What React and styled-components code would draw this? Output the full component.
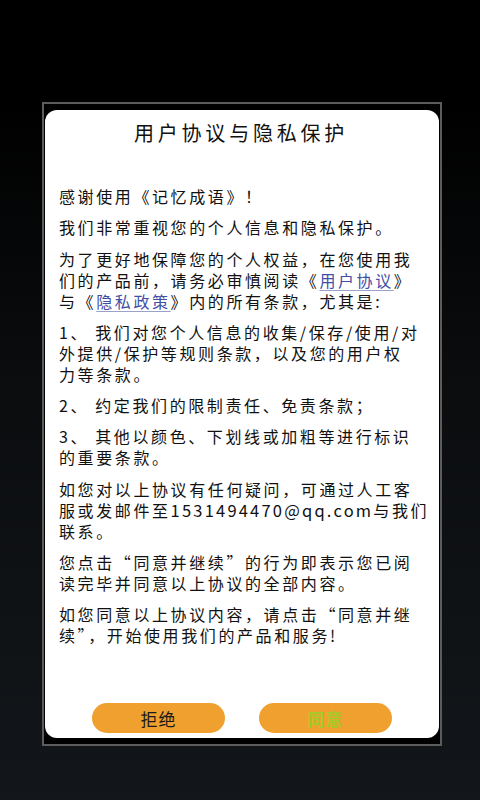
import React from 'react';
import styled, { createGlobalStyle } from 'styled-components';

const GlobalStyle = createGlobalStyle`
    html, body {
        margin: 0;
        padding: 0;
    }
    body {
        font-family: "Noto Sans CJK SC", "Noto Sans", sans-serif;
        background: #000;
    }
`;

const Page = styled.div`
    width: 480px;
    height: 800px;
    box-sizing: border-box;
    padding: 102px 38px 0 42px;
    background: linear-gradient(180deg, #000 0%, #000 12%, #0b0d0f 50%, #13161a 100%);
`;

const Frame = styled.div`
    width: 400px;
    height: 644px;
    box-sizing: border-box;
    border: 2px solid #5c5c5c;
    background: #000;
    padding: 6px 2px 6px 1px;
    display: flex;
`;

const Card = styled.div`
    flex: 1;
    background: #fff;
    border-radius: 12px;
    display: flex;
    flex-direction: column;
    padding: 11px 10px 5px 14px;
`;

const Title = styled.h2`
    margin: 0 0 41px;
    font-size: 20px;
    font-weight: 400;
    line-height: 24px;
    letter-spacing: 3.8px;
    text-align: center;
    color: #111;
    padding-right: 6px;
`;

const Body = styled.div`
    flex: 1;
    color: #111;
    font-size: 16px;
    line-height: 21px;
    letter-spacing: 2.6px;
`;

const Para = styled.p`
    margin: 0 0 10.3px;
`;

const Line = styled.span`
    display: block;
    white-space: nowrap;
`;

const Mail = styled.span`
    letter-spacing: 2.2px;
    font-size: 16.5px;
`;

const Link = styled.span`
    color: #3f4fa6;
    text-decoration: underline;
    text-decoration-color: #9aa2cc;
    text-decoration-thickness: 1px;
    text-underline-offset: 3px;
`;

const Actions = styled.div`
    display: flex;
    justify-content: center;
    gap: 34px;
    margin-left: -14px;
    margin-right: -10px;
`;

const Button = styled.button`
    width: 133px;
    height: 30px;
    border: none;
    border-radius: 15px;
    background: #f0a02e;
    font-family: "Noto Sans CJK SC", sans-serif;
    font-size: 17px;
    letter-spacing: 1px;
    font-weight: ${(p) => (p.$accent ? 700 : 400)};
    color: ${(p) => (p.$accent ? '#a4cc28' : '#1a1a1a')};
    padding: 0;
`;

const paragraphs = [
    ['感谢使用《记忆成语》！'],
    ['我们非常重视您的个人信息和隐私保护。'],
    [
        '为了更好地保障您的个人权益，在您使用我',
        <>们的产品前，请务必审慎阅读《<Link>用户协议</Link>》</>,
        <>与《<Link>隐私政策</Link>》内的所有条款，尤其是:</>,
    ],
    ['1、 我们对您个人信息的收集/保存/使用/对', '外提供/保护等规则条款，以及您的用户权', '力等条款。'],
    ['2、 约定我们的限制责任、免责条款；'],
    ['3、 其他以颜色、下划线或加粗等进行标识', '的重要条款。'],
    [
        '如您对以上协议有任何疑问，可通过人工客',
        <>服或发邮件至<Mail>1531494470@qq.com</Mail>与我们</>,
        '联系。',
    ],
    ['您点击“同意并继续”的行为即表示您已阅', '读完毕并同意以上协议的全部内容。'],
    ['如您同意以上协议内容，请点击“同意并继', '续”，开始使用我们的产品和服务!'],
];

export default function App() {
    return (
        <>
            <GlobalStyle />
            <Page>
                <Frame>
                    <Card>
                        <Title>用户协议与隐私保护</Title>
                        <Body>
                            {paragraphs.map((lines, i) => (
                                <Para key={i}>
                                    {lines.map((line, j) => (
                                        <Line key={j}>{line}</Line>
                                    ))}
                                </Para>
                            ))}
                        </Body>
                        <Actions>
                            <Button>拒绝</Button>
                            <Button $accent>同意</Button>
                        </Actions>
                    </Card>
                </Frame>
            </Page>
        </>
    );
}
